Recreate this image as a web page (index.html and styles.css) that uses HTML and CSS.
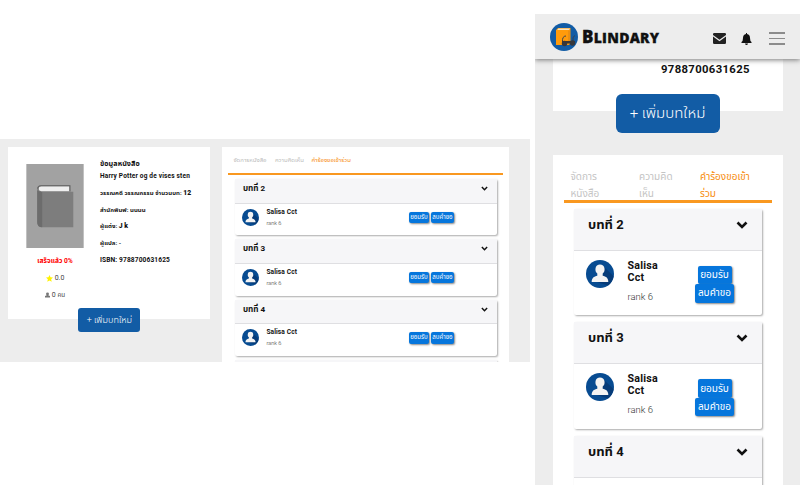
FILE: index.html
```
<!DOCTYPE html>
<html lang="th">
<head>
<meta charset="utf-8">
<title>Blindary</title>
<link rel="stylesheet" href="styles.css">
</head>
<body>
<svg width="0" height="0" class="defs">
  <symbol id="avatar" viewBox="0 0 28 28"><circle cx="14" cy="14" r="14" fill="#074b91"/><path d="M18 7L27.500 16A14 14 0 0 1 22 25.500L8 21z" fill="#063b78"/><path d="M5.700 22C5.700 18 8 16.500 11.300 15.800L11.300 13.500C9.800 12.500 9.200 10.500 9.500 8.500C9.800 3.300 18.200 3.300 18.500 8.500C18.800 10.500 18.200 12.500 16.700 13.500L16.700 15.800C20 16.500 22.300 18 22.300 22z" fill="#f3f3f3"/></symbol>
  <symbol id="chev" viewBox="0 0 12 8"><path d="M1.500 1.500L6 6L10.500 1.500" fill="none" stroke="#111" stroke-width="2.600"/></symbol>
</svg>
<main class="stage">
  <section class="desktop">
    <div class="card info">
      <div class="cover-col">
        <svg class="cover" viewBox="0 0 58 85"><rect width="58" height="85" fill="#a2a2a2"/><path d="M15 21.500H44.500V28H47.500V64H16Q11 64 11 59V26Q11 21.500 15 21.500z" fill="#7d7d7d"/><path d="M11 26Q11 28 16 28V64Q11 64 11 59z" fill="#6c6c6c"/><path d="M15 22.500H44V27.500H15A2.500 2.500 0 0 1 15 22.500z" fill="#efefef"/><path d="M44 27.500V22H15Q11.500 22 11.500 25" fill="none" stroke="#666" stroke-width="1.200"/></svg>
        <div class="stat red"><span>เสร็จแล้ว 0%</span></div>
        <div class="stat"><svg class="ic" viewBox="0 0 14 14"><path d="M7 0L9.100 4.700L14 5.200L10.300 8.600L11.400 13.700L7 11L2.600 13.700L3.700 8.600L0 5.200L4.900 4.700z" fill="#fff200"/></svg><span>0.0</span></div>
        <div class="stat"><svg class="ic small" viewBox="0 0 14 14"><path d="M3 3.500a4 3.500 0 0 1 8 0Q11 7 9 8L14 10V14H0V10L5 8Q3 7 3 3.500z" fill="#777"/></svg><span>0 <small>คน</small></span></div>
      </div>
      <div class="facts">
        <div class="fact head"><span>ข้อมูลหนังสือ</span></div>
        <div class="fact book"><span>Harry Potter og de vises sten</span></div>
        <div class="fact cat"><span>วรรณคดี วรรณกรรม จำนวนบท: <b class="num">12</b></span></div>
        <div class="fact"><span>สำนักพิมพ์: นนนน</span></div>
        <div class="fact"><span>ผู้แต่ง: <b class="num">J k</b></span></div>
        <div class="fact"><span>ผู้แปล: -</span></div>
        <div class="fact isbn"><span>ISBN: 9788700631625</span></div>
      </div>
      <a class="add">+ เพิ่มบทใหม่</a>
    </div>
    <div class="card requests">
      <nav class="tabs"><span class="t1">จัดการหนังสือ</span><span class="t2">ความคิดเห็น</span><span class="t3 on">คำร้องขอเข้าร่วม</span></nav>
      <div class="chapter"><div class="bar"><span>บทที่ 2</span><svg><use href="#chev"/></svg></div><div class="person"><svg class="av"><use href="#avatar"/></svg><div class="who"><b>Salisa Cct</b><i>rank 6</i></div><div class="acts"><span class="btn ok">ยอมรับ</span><span class="btn del">ลบคำขอ</span></div></div></div>
      <div class="chapter"><div class="bar"><span>บทที่ 3</span><svg><use href="#chev"/></svg></div><div class="person"><svg class="av"><use href="#avatar"/></svg><div class="who"><b>Salisa Cct</b><i>rank 6</i></div><div class="acts"><span class="btn ok">ยอมรับ</span><span class="btn del">ลบคำขอ</span></div></div></div>
      <div class="chapter"><div class="bar"><span>บทที่ 4</span><svg><use href="#chev"/></svg></div><div class="person"><svg class="av"><use href="#avatar"/></svg><div class="who"><b>Salisa Cct</b><i>rank 6</i></div><div class="acts"><span class="btn ok">ยอมรับ</span><span class="btn del">ลบคำขอ</span></div></div></div>
      <div class="chapter"><div class="bar"></div></div>
    </div>
  </section>
  <section class="mobile">
    <header class="top">
      <svg class="logo" viewBox="0 0 28 28"><circle cx="14" cy="14" r="14" fill="#125ca5"/><path d="M6 7L8 5H20.500V20L19 22H6z" fill="#ff9b0b"/><path d="M7.200 7L8.400 5.500H20L19 7z" fill="#f6e4c5"/><path d="M19 7.500V21" stroke="#d88318" stroke-width="1"/><path d="M12.500 19Q12 13 16 13M23 18Q22 13.500 25 12.500" fill="none" stroke="#39414b" stroke-width="1"/><path d="M12.500 18H25V20.500H12.500z" fill="#37373a"/><circle cx="14.500" cy="20.500" r="2.700" fill="#37373a"/><circle cx="22.500" cy="20" r="2.700" fill="#37373a"/></svg>
      <span class="brand"><big>B</big>LINDARY</span>
      <svg class="mail" viewBox="0 0 13 11"><path d="M0 1.200Q0 0 1.200 0H11.800Q13 0 13 1.200V2L6.500 6.800L0 2zM0 3.500L6.500 8.300L13 3.500V9.800Q13 11 11.800 11H1.200Q0 11 0 9.800z" fill="#222"/></svg>
      <svg class="bell" viewBox="0 0 11 12"><path d="M5 0H6V1Q9 1.500 9 5Q9 8 10.500 9V10H.5V9Q2 8 2 5Q2 1.500 5 1zM4 10.500H7Q6.700 12 5.500 12T4 10.500z" fill="#111"/></svg>
      <span class="menu"><i></i><i></i><i></i></span>
    </header>
    <div class="card info"><span class="code">9788700631625</span><a class="add">+ เพิ่มบทใหม่</a></div>
    <div class="card requests">
      <nav class="tabs"><span class="t1">จัดการ<br>หนังสือ</span><span class="t2">ความคิด<br>เห็น</span><span class="t3 on">คำร้องขอเข้า<br>ร่วม</span></nav>
      <div class="chapter"><div class="bar"><span>บทที่ 2</span><svg><use href="#chev"/></svg></div><div class="person"><svg class="av"><use href="#avatar"/></svg><div class="who"><b>Salisa<br>Cct</b><i>rank 6</i></div><div class="acts"><span class="btn ok">ยอมรับ</span><span class="btn del">ลบคำขอ</span></div></div></div>
      <div class="chapter"><div class="bar"><span>บทที่ 3</span><svg><use href="#chev"/></svg></div><div class="person"><svg class="av"><use href="#avatar"/></svg><div class="who"><b>Salisa<br>Cct</b><i>rank 6</i></div><div class="acts"><span class="btn ok">ยอมรับ</span><span class="btn del">ลบคำขอ</span></div></div></div>
      <div class="chapter"><div class="bar"><span>บทที่ 4</span><svg><use href="#chev"/></svg></div><div class="person"></div></div>
    </div>
  </section>
</main>
</body>
</html>
```
FILE: styles.css
```
*{box-sizing:border-box}
body{margin:0;background:#fff;font-family:Roboto,"Noto Sans Thai","Noto Sans",sans-serif;color:#111}
.defs{display:block}
i{font-style:normal}
small{font-size:.9em}
svg{display:block;flex:none}
.stage{display:flex;gap:5px;height:500px;overflow:hidden}
.stage span,.stage b,.stage i,.add{white-space:nowrap}
.desktop{width:530px;height:223px;margin-top:139px;background:#ededed;display:flex;align-items:flex-start;padding:8px 0 0 8.400px;gap:12px;overflow:hidden}
.card{background:#fff}
.desktop .info{width:202px;height:172px;display:flex;position:relative;padding:10px 0 0 17.600px;gap:16px}
.cover-col{width:58px;padding-top:7px}
.cover{width:58px;height:84px;margin-bottom:5px}
.stat{height:16.700px;display:flex;justify-content:center;align-items:center;gap:2px;font-size:7px;color:#444}
.red{color:#f00;font-weight:700;font-size:6.700px}
.ic{width:7px;height:7px}.small{width:5px;height:6px}
.fact{height:16.700px;line-height:16.700px;font-size:6px;font-weight:700;letter-spacing:.05px}
.fact.head{height:13px;line-height:13px;font-size:7.200px}
.fact.book{height:13px;line-height:13px;font-size:6.500px;margin-bottom:2px;letter-spacing:.18px}
.fact.isbn{font-size:6.600px;letter-spacing:.13px}
.num{font-size:6.800px}
.add{position:absolute;display:flex;align-items:center;justify-content:center;background:#125ca5;color:#fff;font-weight:300}
.desktop .add{left:70px;top:161px;width:62px;height:24px;border-radius:3px;font-size:9px}
.desktop .requests{width:287px;height:240px;padding:0 6px}
.desktop .tabs{height:28px;border-bottom:2px solid #f99820;display:flex;line-height:26px;padding-left:5px;font-size:6px;color:#bbb;margin-bottom:4px}
.desktop .t1{width:41.500px}.desktop .t2{width:36.500px}
.tabs .on{color:#f78c0c}
.chapter{background:#fff;box-shadow:1px 1px 2px #aaa;border-radius:2px}
.desktop .chapter{width:262px;height:56.300px;margin:0 0 4px 6.500px}
.bar{display:flex;justify-content:space-between;background:#f6f6f8;border-bottom:1px solid #dfdfe2;font-weight:700}
.desktop .bar{height:24.500px;padding:0 9px 0 8px;font-size:8.100px;line-height:18.500px}
.desktop .bar svg{width:7px;height:5px;margin-top:7px}
.desktop .bar use,.desktop .bar svg{overflow:visible}
.person{display:flex}
.desktop .person{padding:5px 0 0 7px}
.desktop .av{width:17px;height:17px}
.who{display:flex;flex-direction:column}
.desktop .who{width:142.500px;margin-left:7.500px}
.desktop .who b{font-size:6.600px;line-height:7px;letter-spacing:.1px}
.who i{color:#333;font-weight:300}
.desktop .who i{font-size:5.600px;line-height:15px}
.btn{display:flex;align-items:center;justify-content:center;background:#0676dc;color:#fff;border-radius:2px;box-shadow:1px 1px 2px #888}
.desktop .acts{display:flex;gap:2px;padding-top:3px}
.desktop .btn{height:11.500px;width:23px;font-size:6.100px}.desktop .ok{width:20px}
.mobile{width:265px;height:471px;margin-top:14px;background:#ededed;overflow:hidden}
.top{height:45px;background:#ededed;display:flex;align-items:center;position:relative;z-index:1;box-shadow:0 1px 5px #777;padding:0 15px}
.logo{width:28px;height:28px}
.brand{font-family:"Open Sans",sans-serif;font-weight:800;font-size:14px;width:80px;margin-left:4px;margin-top:-1px;letter-spacing:.25px;-webkit-text-stroke:.3px #111}
.brand big{font-size:17px}
.mail{width:13px;height:11px;margin-left:51px;margin-top:3px}.bell{width:11px;height:12px;margin-left:15px;margin-top:4px}
.menu{display:flex;flex-direction:column;gap:4px;width:16px;margin-left:17px;margin-top:4px}.menu i{height:1.500px;background:#8c8c8c}
.mobile .info{width:229.500px;height:52px;margin:0 0 43.500px 18px;position:relative;padding:0 0 0 108px;display:flex}
.code{font-size:11.300px;font-weight:700;line-height:21px;letter-spacing:.35px}
.mobile .add{left:62.500px;top:35px;width:104px;height:39px;border-radius:6px;font-size:15px}
.mobile .requests{width:229.500px;height:340px;margin-left:18px;padding:0 10.500px}
.mobile .tabs{height:48px;border-bottom:3.500px solid #f99820;display:flex;padding:13.500px 0 0 7px;line-height:17px;font-size:10px;color:#c4c4c4;margin-bottom:6px}
.mobile .t1{width:68.500px}.mobile .t2{width:61px}
.mobile .chapter{width:188px;height:106.500px;margin:0 0 7.300px 10.500px}
.mobile .bar{height:42px;padding:0 14px;font-size:13px;line-height:32px}
.mobile .bar svg{width:12px;height:8px;margin-top:12px}
.mobile .person{padding:9px 0 0 12px}
.mobile .av{width:28px;height:28px}
.mobile .who{width:67.500px;margin-left:13.500px}
.mobile .who b{font-size:10.700px;line-height:12px;letter-spacing:.2px}.mobile .who i{font-size:9.500px;line-height:25px}
.mobile .acts{display:flex;flex-direction:column;align-items:center;width:39px;padding-top:6px}
.mobile .btn{font-size:10px;width:39px;height:18.500px}.mobile .ok{width:34px}
```
